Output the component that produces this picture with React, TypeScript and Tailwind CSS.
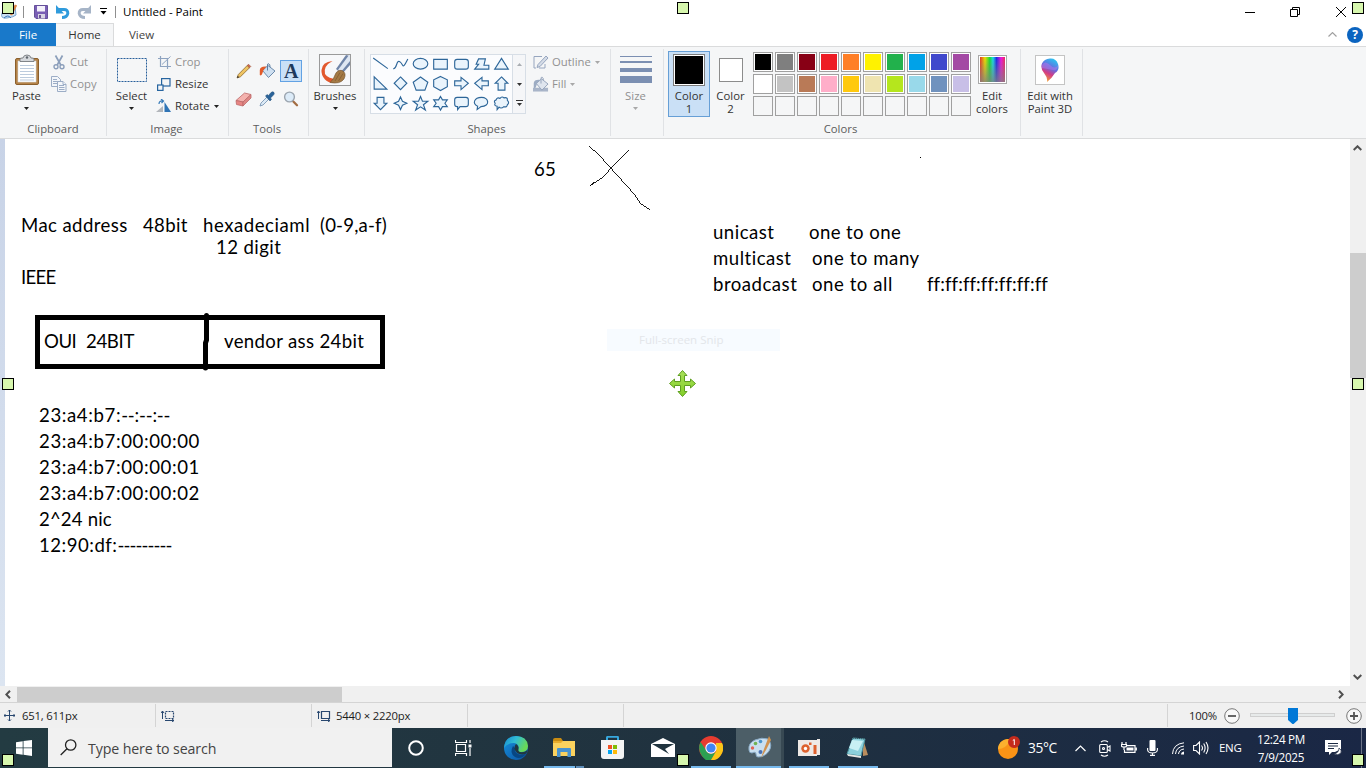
import React from "react";

type Kids = { children?: React.ReactNode };

function Caret({ c = "#333333" }: { c?: string }) {
  return (
    <svg width="5" height="3" viewBox="0 0 5 3" className="shrink-0">
      <path d="M0 0H5L2.5 3Z" fill={c} />
    </svg>
  );
}

function Group({ label, width, children, line = true, nudge = "pr-0" }: Kids & { label?: string; width: string; line?: boolean; nudge?: string }) {
  return (
    <div className={`${width} flex h-[91px] shrink-0 py-[2px]`}>
      <div className={`flex min-w-0 flex-1 flex-col ${line ? "border-r border-[#e0e2e5]" : ""}`}>
        <div className="flex h-[72px] w-full">{children}</div>
        <div className={`flex h-[15px] items-center justify-center pt-[1px] text-[#5c5c5c] ${nudge}`}>{label}</div>
      </div>
    </div>
  );
}

function BigButton({ icon, text, width, dim }: { icon: React.ReactNode; text: string; width: string; dim?: boolean }) {
  return (
    <div className={`${width} flex shrink-0 flex-col items-center ${dim ? "text-[#8f8f8f]" : "text-[#333]"}`}>
      <div className="flex h-[40px] w-full items-center justify-center pt-[1px]">{icon}</div>
      <div className="h-[13px] leading-[13px]">{text}</div>
      <div className="flex h-[13px] items-center">
        <Caret c={dim ? "#a8a8a8" : "#222222"} />
      </div>
    </div>
  );
}

function SmallRow({ icon, text, dim, caret }: { icon: React.ReactNode; text: string; dim?: boolean; caret?: boolean }) {
  return (
    <div className={`flex h-[22px] items-center ${dim ? "text-[#919191]" : "text-[#333]"}`}>
      <div className="mr-[3px] flex w-[16px] justify-center">{icon}</div>
      <span>{text}</span>
      {caret && <span className="ml-[4px] flex"><Caret c={dim ? "#a8a8a8" : "#222222"} /></span>}
    </div>
  );
}

function PasteIcon() {
  return (
    <svg width="26" height="32" viewBox="0 0 26 32">
      <rect x="1.5" y="4.5" width="23" height="26" rx="1.5" fill="#b58348" stroke="#8b5f2c" />
      <rect x="4" y="7" width="18" height="21" fill="#fff" stroke="#d6dce4" strokeWidth=".6" />
      <path d="M6 11.5H20M6 14.5H20M6 17.5H20M6 20.5H20M6 23.5H20M6 26H20" stroke="#bccbdd" />
      <path d="M6 7.5V5Q6 4 8 4H9Q9.500 1 13 1T17 4H18Q20 4 20 5V7.500Z" fill="#d5d8dc" stroke="#74787d" strokeWidth=".9" />
      <circle cx="13" cy="3.500" r="1.200" fill="#5f666e" />
    </svg>
  );
}

function CutIcon() {
  return (
    <svg width="12" height="15" viewBox="0 0 12 15" fill="none" stroke="#8c9fbb">
      <path d="M2.500 .5L7.800 10M9.500 .5L4.200 10" strokeWidth="1.700" />
      <circle cx="3" cy="11.800" r="2" strokeWidth="1.400" />
      <circle cx="9" cy="11.800" r="2" strokeWidth="1.400" />
    </svg>
  );
}

function CopyIcon() {
  return (
    <svg width="16" height="16" viewBox="0 0 16 16" fill="#f3f6fa" stroke="#9cadc6">
      <path d="M.5 .5H6.500L9.500 3.500V10.500H.5Z" />
      <path d="M2 3.500H6M2 5.500H7M2 7.500H7" />
      <path d="M6.500 5.500H12L15 8.500V15.500H6.500Z" />
      <path d="M8 9.500H13M8 11.500H13.500M8 13.500H13.500M12 5.500V8.500H15" />
    </svg>
  );
}

function CropIcon() {
  return (
    <svg width="13" height="13" viewBox="0 0 13 13" fill="none" stroke="#8ea3c0">
      <path d="M0 2.500H9.500V13M2.500 0V10.500H13" strokeWidth="1.200" />
      <path d="M4 8.500L12.500 .5" />
    </svg>
  );
}

function ResizeIcon() {
  return (
    <svg width="14" height="13" viewBox="0 0 14 13" fill="#f5f6f7" stroke="#2765a0" strokeWidth="1.200">
      <rect x="4.600" y=".6" width="8.400" height="7.400" />
      <rect x=".6" y="7" width="5.400" height="5.400" />
    </svg>
  );
}

function RotateIcon() {
  return (
    <svg width="16" height="14" viewBox="0 0 16 14">
      <path d="M0 13L7 7V13Z" fill="#b3b7bc" />
      <path d="M8.500 13V3L15 13Z" fill="#2f74b5" />
      <path d="M3 5Q3 1.500 7 2M5 0L7.500 2L5.500 4" fill="none" stroke="#3579b8" strokeWidth="1.200" />
    </svg>
  );
}

function PencilIcon() {
  return (
    <svg width="16" height="16" viewBox="0 0 16 16">
      <path d="M1 15L2.300 11.500L11.200 2.500L13.500 4.800L4.500 13.700Z" fill="#efc462" stroke="#8e6a2e" strokeWidth=".8" />
      <path d="M11.200 2.500L12.500 1.200L14.800 3.500L13.500 4.800Z" fill="#cf6a4c" stroke="#96503b" strokeWidth=".6" />
      <path d="M1 15L1.700 12.700L3.300 14.300Z" fill="#333" />
    </svg>
  );
}

function BucketIcon({ dim }: { dim?: boolean }) {
  return (
    <svg width="17" height="16" viewBox="0 0 17 16">
      {dim && <rect x="0" y="12" width="16" height="4" fill="#a9b5c9" />}
      <path d="M9 2.500L16 8L9.500 14.500L3.500 7.500Z" fill={dim ? "#dfe5ee" : "#cfe0f1"} stroke={dim ? "#93a2ba" : "#6c8bac"} />
      <path d="M8.500 7.500V2Q8.500 .5 9.800 .8T11 4" fill="none" stroke={dim ? "#93a2ba" : "#5a7ea5"} />
      <path d="M7.500 3.500Q1 3 .8 7V12Q2.500 13.500 3.500 10L4.500 7Z" fill={dim ? "#9dacc3" : "#e25b2a"} />
    </svg>
  );
}

function EraserIcon() {
  return (
    <svg width="17" height="15" viewBox="0 0 17 15" strokeWidth=".8" stroke="#bd6a69">
      <path d="M1 8.500L9.500 1L16 2.500L8 10Z" fill="#f4b2ae" />
      <path d="M1 8.500L8 10V14L1.500 12.500Z" fill="#e88583" />
      <path d="M8 10L16 2.500V6L8 14Z" fill="#df8785" />
    </svg>
  );
}

function PickerIcon() {
  return (
    <svg width="16" height="16" viewBox="0 0 16 16">
      <path d="M1 15L2 12L8 6L10 8L4 14Z" fill="#dceaf6" stroke="#6e8eae" strokeWidth=".8" />
      <path d="M6.500 5L8 3.500L9.500 4.500L12 1.500Q14 0 15 1.500T14 4.500L11.500 7L12.500 8.500L11 10Z" fill="#2a6399" stroke="#1f4c79" strokeWidth=".5" />
    </svg>
  );
}

function MagnifierIcon() {
  return (
    <svg width="16" height="16" viewBox="0 0 16 16">
      <path d="M9.800 10L14 14.300" stroke="#a36d43" strokeWidth="2.300" strokeLinecap="round" />
      <circle cx="6.500" cy="6" r="4.900" fill="#dcebf8" stroke="#9ba5af" strokeWidth="1.400" />
    </svg>
  );
}

function BrushIcon() {
  return (
    <svg width="32" height="32" viewBox="0 0 32 32">
      <rect x=".5" y=".5" width="31" height="31" fill="#f7f8fa" stroke="#9a9a9a" />
      <path d="M31 2L27 1L17 15L23 20L31 11Z" fill="#7085a8" />
      <path d="M30 1L19 16L21.500 18.500L31 7V1Z" fill="#dfe7f2" />
      <path d="M13.500 7Q3 8 2.500 16Q2 21 6 25.500Q10 30 17 28L19 25Q9 25 6 20Q4 12 13.500 7Z" fill="#e2582d" />
      <path d="M11 28.500Q15 25 16 21Q18 15.500 23 16.500Q28 19 25 25Q21 30.500 11 28.500Z" fill="#a47a45" stroke="#6d4f2c" strokeWidth=".6" />
      <path d="M16 27L21 18.500M19.500 27L24 19.500" stroke="#7c5930" strokeWidth=".7" />
    </svg>
  );
}

const shapes: string[] = [
  "M2 3L17 14",
  "M2 14C6 15 5 4 9 7S11 16 17 4",
  "M17 9A7.500 5.500 0 1 1 2 9A7.500 5.500 0 1 1 17 9Z",
  "M2.500 4.500H16.500V14.500H2.500Z",
  "M5 4.500H14Q16.500 4.500 16.500 7V12Q16.500 14.500 14 14.500H5Q2.500 14.500 2.500 12V7Q2.500 4.500 5 4.500Z",
  "M2.500 14.500L6.500 9.500H4L6.500 4H13.500L12 10.500H17V14.500Z",
  "M9.500 3.500L16.500 14.500H2.500Z",
  "M3 3V15.500H16Z",
  "M9.500 3L16 9.500L9.500 16L3 9.500Z",
  "M9.500 3L17 8.500L14 16.500H5L2 8.500Z",
  "M9.500 2.500L16.500 6V13L9.500 17L2.500 13V6Z",
  "M2.500 7H9V3.500L16.500 9.500L9 16V12H2.500Z",
  "M16.500 7H10V3.500L2.500 9.500L10 16V12H16.500Z",
  "M9.500 3L16 9.500H13V16.500H6V9.500H3Z",
  "M6 3.500H13V9.500H16L9.500 16L3 9.500H6Z",
  "M9.500 3L11.500 7.500L16 9.500L11.500 11.500L9.500 16L7.500 11.500L3 9.500L7.500 7.500Z",
  "M9.500 2.500L11.500 7.500H17L12.500 11L14.500 16.500L9.500 13.200L4.500 16.500L6.500 11L2 7.500H7.500Z",
  "M9.500 2.500L11.500 6H16.500L14 9.500L16.500 13H11.500L9.500 16.500L7.500 13H2.500L5 9.500L2.500 6H7.500Z",
  "M5 3.500H14Q16.500 3.500 16.500 6V10.500Q16.500 13 14 13H8L5.500 16V13H5Q2.500 13 2.500 10.500V6Q2.500 3.500 5 3.500Z",
  "M5.500 12.500C-.5 10 2 3.500 9.500 3.500S19 12.500 9 13L5 16Z",
  "M5 12.500Q1.500 12 3 9.500Q1 7 4 6Q5 3 8 4.500Q10 2 12 4Q16 3 15.500 6.500Q18 9 15.500 11Q15 14 12 13Q9 15.500 7 13.500L5 16Z",
];

function ShapesGallery() {
  return (
    <div className="ml-[5px] mt-[5px] flex h-[60px] w-[156px] border border-[#d7dee6] bg-[#fbfcfe]">
      <div className="grid w-[142px] grid-cols-7 grid-rows-3 border-r border-[#d7dee6]">
        {shapes.map((d, i) => (
          <svg key={i} className="h-[19.500px] w-[20px]" viewBox="0 0 20 20" fill={i < 2 ? "none" : "#eaf4fc"} stroke="#2d6699" strokeWidth="1.150">
            <path d={d} />
          </svg>
        ))}
      </div>
      <div className="flex flex-1 flex-col items-center justify-between bg-[#f5f6f8] pb-[6px] pt-[8px]">
        <span className="rotate-180"><Caret c="#a9adb2" /></span>
        <span className="pt-[2px]"><Caret /></span>
        <svg width="7" height="7" viewBox="0 0 7 7"><path d="M0 .5H7" stroke="#333" /><path d="M1 3H6L3.500 6Z" fill="#333" /></svg>
      </div>
    </div>
  );
}

function OutlineIcon() {
  return (
    <svg width="16" height="14" viewBox="0 0 16 14" fill="none" stroke="#97a6bf">
      <path d="M9 1.500H1V13H3M12 9V13H6" />
      <path d="M4 12.500L5 9.500L13 1L15 3L7 11.500Z" fill="#d5dce7" />
    </svg>
  );
}

const palette = [
  "#000000", "#7f7f7f", "#880015", "#ed1c24", "#ff7f27", "#fff200", "#22b14c", "#00a2e8", "#3f48cc", "#a349a4",
  "#ffffff", "#c3c3c3", "#b97a57", "#ffaec9", "#ffc90e", "#efe4b0", "#b5e61d", "#99d9ea", "#7092be", "#c8bfe7",
];

function ColorsGroup() {
  return (
    <Group label="Colors" width="w-[357px]" nudge="pr-[3px]">
      <div className="ml-[4px] mt-[2px] flex h-[66px] w-[42px] shrink-0 flex-col items-center border border-[#669fd6] bg-[#cae0f6] pt-[2px] text-center leading-[13px] text-[#333]">
        <div className="h-[32px] w-[32px] border border-[#7c7c7c] bg-white p-px"><div className="h-full w-full bg-black" /></div>
        <div className="mt-[3px]">Color<br />1</div>
      </div>
      <div className="flex w-[41px] shrink-0 flex-col items-center pt-[9px] text-center leading-[13px] text-[#333]">
        <div className="h-[24px] w-[24px] border border-[#8c8c8c] bg-white" />
        <div className="mt-[7px]">Color<br />2</div>
      </div>
      <div className="ml-[2px] mt-[3px] grid h-[64px] w-[218px] shrink-0 grid-cols-10 gap-[2px]">
        {Array.from({ length: 30 }, (_, i) => (
          <div key={i} className={`h-[20px] w-[20px] border border-[#a0a0a0] p-px ${i < 20 ? "bg-white" : "bg-[#f5f6f7]"}`}>
            {i < 20 && <div className="h-full w-full" style={{ background: palette[i] }} />}
          </div>
        ))}
      </div>
      <div className="flex w-[42px] shrink-0 flex-col items-center pt-[6px] text-center leading-[13px] text-[#333]">
        <div className="h-[29px] w-[29px] border border-[#a9a9a9] bg-white p-px">
          <div className="h-full w-full bg-[linear-gradient(to_bottom,transparent,#808080cc),linear-gradient(to_right,#e73520,#efe000_20%,#11de31_39%,#17dce8_52%,#1a29e8_66%,#ef13df_84%,#ee285c)]" />
        </div>
        <div className="mt-[5px]">Edit<br />colors</div>
      </div>
    </Group>
  );
}

function Paint3DIcon() {
  return (
    <div className="flex h-[30px] w-[30px] items-center justify-center border border-[#c4c4c4] bg-white">
      <svg width="18" height="25" viewBox="0 0 18 25">
        <defs>
          <linearGradient id="p3d" x1=".7" y1="0" x2=".3" y2="1">
            <stop offset="0" stopColor="#29c5f0" />
            <stop offset=".4" stopColor="#686adf" />
            <stop offset=".65" stopColor="#d13c86" />
            <stop offset="1" stopColor="#f6a92b" />
          </linearGradient>
        </defs>
        <path d="M6 24Q7 20 3 15Q-1 10 1 5.500T9 .5T17 6T14 15Q11 20 6 24Z" fill="url(#p3d)" />
        <path d="M1 7Q4 2 9 7T17 7Q17 13 12 12T1 10Z" fill="#ad78e7" opacity=".55" />
      </svg>
    </div>
  );
}

function Ribbon() {
  return (
    <div className="flex h-[93px] shrink-0 border-y border-[#dadbdc] bg-[#f5f6f7] text-[11.300px] tracking-[0.020px]">
      <Group label="Clipboard" width="w-[107px]">
        <BigButton width="w-[53px]" icon={<PasteIcon />} text="Paste" />
        <div className="-ml-[2px] flex flex-col pt-[2px]">
          <SmallRow dim icon={<CutIcon />} text="Cut" />
          <SmallRow dim icon={<CopyIcon />} text="Copy" />
        </div>
      </Group>
      <Group label="Image" width="w-[122px]" nudge="pr-[2px]">
        <BigButton width="w-[49px]" text="Select" icon={<svg width="30" height="24"><rect x=".5" y=".5" width="29" height="23" fill="none" stroke="#275f9b" strokeDasharray="2 1" /></svg>} />
        <div className="flex flex-col pt-[2px]">
          <SmallRow dim icon={<CropIcon />} text="Crop" />
          <SmallRow icon={<ResizeIcon />} text="Resize" />
          <SmallRow icon={<RotateIcon />} text="Rotate" caret />
        </div>
      </Group>
      <Group label="Tools" width="w-[80px]" nudge="pr-[3px]">
        <div className="ml-[3px] mt-[6px] grid h-[57px] w-[71px] grid-cols-3 place-items-center">
          <PencilIcon />
          <BucketIcon />
          <div className="flex h-[22px] w-[22px] items-center justify-center border border-[#62a2e4] bg-[#c9e0f7] font-['Liberation_Serif',serif] text-[20px] font-bold leading-none text-[#1f3a5c]">A</div>
          <EraserIcon />
          <PickerIcon />
          <MagnifierIcon />
        </div>
      </Group>
      <Group width="w-[56px]"><BigButton width="w-[52px]" icon={<BrushIcon />} text="Brushes" /></Group>
      <Group label="Shapes" width="w-[246px]" nudge="pr-[2px]">
        <ShapesGallery />
        <div className="ml-[7px] flex flex-col pt-[2px]">
          <SmallRow dim icon={<OutlineIcon />} text="Outline" caret />
          <SmallRow dim icon={<BucketIcon dim />} text="Fill" caret />
        </div>
      </Group>
      <Group width="w-[53px]">
        <BigButton dim width="w-[49px]" text="Size" icon={<div className="flex flex-col"><i className="h-px w-[32px] bg-[#7b8fb2]" /><i className="mt-[4px] h-[2px] w-[32px] bg-[#7b8fb2]" /><i className="mt-[5px] h-[4px] w-[32px] bg-[#7b8fb2]" /><i className="mt-[4px] h-[7px] w-[32px] bg-[#7b8fb2]" /></div>} />
      </Group>
      <ColorsGroup />
      <Group width="w-[62px]">
        <div className="flex w-[58px] flex-col items-center pt-[6px] text-center leading-[13px] text-[#333]">
          <Paint3DIcon />
          <div className="mt-[4px] whitespace-nowrap">Edit with<br />Paint 3D</div>
        </div>
      </Group>
    </div>
  );
}

function TitleBar() {
  return (
    <div className="flex h-[23px] shrink-0 items-center bg-white">
      <svg className="ml-[1px]" width="16" height="17" viewBox="0 0 16 17">
        <path d="M1 10Q-1 16 6 15T15 12L14 3L5 5Z" fill="#cfe2f3" stroke="#7ba7d0" />
        <path d="M10 12L15 2" stroke="#dc8644" strokeWidth="2.500" />
        <path d="M3 15Q7 11 10 15" stroke="#3a78bd" fill="none" />
      </svg>
      <div className="ml-[6px] h-[12px] w-px bg-[#8f8f8f]" />
      <svg className="ml-[10px]" width="14" height="14" viewBox="0 0 14 14">
        <path d="M.5 .5H13.500V13.500H2L.5 12Z" fill="#7a5fb5" stroke="#65509a" />
        <rect x="3" y="1" width="8" height="5.500" fill="#f4f1fb" />
        <rect x="4" y="9" width="7" height="4.500" fill="#d8d5e3" />
        <rect x="5" y="10" width="2" height="3" fill="#6b5596" />
      </svg>
      <svg className="ml-[8px]" width="14" height="14" viewBox="0 0 14 14"><path d="M3 4.500H8Q12 4.500 11.800 8.500Q11 12.500 6 12.500" fill="none" stroke="#2f9bdc" strokeWidth="3" /><path d="M0 0V8.500H8Z" fill="#2f9bdc" /></svg>
      <svg className="ml-[7px]" width="14" height="14" viewBox="0 0 14 14"><path d="M11 4.500H6Q2 4.500 2.200 8.500Q3 12.500 8 12.500" fill="none" stroke="#a6b4c7" strokeWidth="3" /><path d="M14 0V8.500H6Z" fill="#a6b4c7" /></svg>
      <svg className="ml-[9px]" width="7" height="7" viewBox="0 0 7 7"><path d="M0 .5H7" stroke="#000" /><path d="M.5 3H6.500L3.500 6.500Z" /></svg>
      <div className="ml-[8px] h-[12px] w-px bg-[#8f8f8f]" />
      <span className="ml-[7px] text-[11.500px] text-black">Untitled - Paint</span>
      <svg className="ml-auto mr-[19px]" width="102" height="12" viewBox="0 0 102 12" fill="none" stroke="#000">
        <path d="M0 6.500H10M45.500 3.500H52.500V10.500H45.500ZM47.500 3V1.500H54.500V8.500H53M91 1L101 11M101 1L91 11" />
      </svg>
    </div>
  );
}

function TabBar() {
  return (
    <div className="flex h-[23px] shrink-0 items-center bg-white text-[11.500px]">
      <div className="flex h-full w-[56px] items-center justify-center bg-[#1979ca] text-white">File</div>
      <div className="-mb-px flex h-[24px] w-[58px] items-center justify-center border-r border-t border-[#dadbdc] bg-[#f5f6f7] pb-px text-[#333]">Home</div>
      <div className="flex w-[55px] items-center justify-center text-[#444]">View</div>
      <svg className="ml-auto mr-[10px]" width="9" height="5" viewBox="0 0 9 5" fill="none" stroke="#a0a0a0" strokeWidth="1.200"><path d="M.5 4.500L4.500 .6L8.500 4.500" /></svg>
      <div className="mr-[3px] flex h-[16px] w-[16px] items-center justify-center rounded-full bg-[#0b64c0] text-[12px] font-bold text-white">?</div>
    </div>
  );
}

function Note({ at, children }: Kids & { at: string }) {
  return <div className={`absolute whitespace-pre leading-[26px] ${at}`}>{children}</div>;
}

function Canvas() {
  return (
    <div className="flex h-[547px] shrink-0">
      <div className="w-[5px] bg-gradient-to-b from-[#c8d3e7] to-[#dce5f1]" />
      <div className="relative flex-1 overflow-hidden bg-white font-[Lato,sans-serif] text-[18.600px] text-black">
        <Note at="left-[529px] top-[17px] tracking-[0.200px]">65</Note>
        <Note at="left-[16px] top-[73px] tracking-[0.400px]">Mac address</Note>
        <Note at="left-[138px] top-[73px] tracking-[0.300px]">48bit</Note>
        <Note at="left-[198px] top-[73px] tracking-[0.550px]">hexadeciaml</Note>
        <Note at="left-[315px] top-[73px] tracking-[0.180px]">(0-9,a-f)</Note>
        <Note at="left-[211px] top-[95px] tracking-[0.400px]">12 digit</Note>
        <Note at="left-[16px] top-[125px] tracking-[-0.700px]">IEEE</Note>
        <Note at="left-[39px] top-[189px] tracking-[-0.500px]">OUI</Note>
        <Note at="left-[81px] top-[189px] tracking-[-0.350px]">24BIT</Note>
        <Note at="left-[219px] top-[189px] tracking-[0.340px]">vendor ass 24bit</Note>
        <Note at="left-[34px] top-[263px] tracking-[0.600px]">
          23:a4:b7:<span className="tracking-[-0.200px]">--:--:--</span>
          {"\n23:a4:b7:00:00:00\n23:a4:b7:00:00:01\n23:a4:b7:00:00:02\n"}
          <span className="tracking-[0.150px]">2^24 nic</span>
          {"\n"}
          <span className="tracking-[0.500px]">12:90:df:</span><span className="tracking-[-0.900px]">---------</span>
        </Note>
        <Note at="left-[708px] top-[80px] tracking-[0.500px]">{"unicast\nmulticast\nbroadcast"}</Note>
        <Note at="left-[804px] top-[80px] tracking-[0.400px]">one to one</Note>
        <Note at="left-[807px] top-[106px] tracking-[0.550px]">{"one to many\none to all"}</Note>
        <Note at="left-[922px] top-[132px] tracking-[0.090px]">ff:ff:ff:ff:ff:ff:ff</Note>
        <svg className="absolute left-0 top-0" width="1345" height="546" viewBox="5 139 1345 546" fill="none" stroke="#000">
          <path d="M37.500 317.500H382.500V366.500H37.500Z" strokeWidth="5" />
          <path d="M206.500 315.500V340L205.500 343V368" strokeWidth="5" strokeLinecap="round" />
          <g shapeRendering="crispEdges">
            <path strokeWidth=".9" d="M589 146L599 155L608 165L618 176L626 185L635 195L641 204L649.500 209.500M629 150L614 165L603 177L590 186L594 182" />
            <path d="M920 157.500H921" />
          </g>
          <defs><linearGradient id="mv" x1="0" y1="0" x2="0" y2="1"><stop offset="0" stopColor="#a8e05a" /><stop offset="1" stopColor="#83cf28" /></linearGradient></defs>
          <path d="M682.500 370.500L687 375.500H684.500V381.500H690.500V379L695.500 383.500L690.500 388V385.500H684.500V391.500H687L682.500 396.500L678 391.500H680.500V385.500H674.500V388L669.500 383.500L674.500 379V381.500H680.500V375.500H678Z" fill="url(#mv)" stroke="#5f9f21" />
        </svg>
        <div className="absolute left-[602px] top-[190px] flex h-[22px] w-[173px] items-center bg-[#f7fbff] pl-[32px] font-['Open_Sans',sans-serif] text-[11.500px] text-[#e3e6ea]">Full-screen Snip</div>
      </div>
      <div className="flex w-[16px] flex-col items-center bg-[#f0f0f0]">
        <svg className="mr-[1px] mt-[6px]" width="9" height="6" fill="none" stroke="#505050" strokeWidth="2"><path d="M.7 5L4.500 1.300L8.300 5" /></svg>
        <div className="mt-[102px] h-[125px] w-full bg-[#cdcdcd]" />
        <svg className="mb-[6px] mr-[1px] mt-auto" width="9" height="6" fill="none" stroke="#505050" strokeWidth="2"><path d="M.7 1L4.500 4.700L8.300 1" /></svg>
      </div>
    </div>
  );
}

function ZoomKnob({ plus }: { plus?: boolean }) {
  return (
    <svg width="16" height="16" viewBox="0 0 16 16" fill="#f8f8f8" stroke="#777">
      <circle cx="8" cy="8" r="7.300" />
      <path d={plus ? "M4 8H12M8 4V12" : "M4 8H12"} stroke="#555" strokeWidth="1.800" />
    </svg>
  );
}

function SizeIcon({ dashed }: { dashed?: boolean }) {
  return (
    <svg width="14" height="12" viewBox="0 0 14 12" fill="none" stroke="#28476f">
      <path d="M4.500 1.500H12.500V8.500H4.500Z" strokeDasharray={dashed ? "2 1" : undefined} strokeWidth="1.200" />
      <path d="M1.500 9V1M0 3L1.500 1L3 3M4 10.500H13M11 9L13 10.500L11 12" />
    </svg>
  );
}

function StatusBar() {
  return (
    <>
      <div className="flex h-[16px] shrink-0 items-center bg-[#f0f0f0]">
        <svg className="ml-[5px]" width="6" height="9" fill="none" stroke="#505050" strokeWidth="2"><path d="M5 .7L1.300 4.500L5 8.300" /></svg>
        <div className="ml-[6px] h-[15px] w-[325px] bg-[#cdcdcd]" />
        <svg className="ml-auto mr-[22px]" width="6" height="9" fill="none" stroke="#505050" strokeWidth="2"><path d="M1 .7L4.700 4.500L1 8.300" /></svg>
      </div>
      <div className="flex h-[26px] shrink-0 items-center border-t border-[#d4d4d4] bg-[#f0f0f0] text-[11.300px] tracking-[-0.200px] text-[#1c1c1c]">
        <div className="flex h-[23px] w-[156px] items-center border-r border-[#d4d4d4] pl-[4px]">
          <svg width="11" height="11" viewBox="0 0 11 11" fill="none" stroke="#28476f"><path d="M5.500 0V11M0 5.500H11M4 1.500L5.500 0L7 1.500M4 9.500L5.500 11L7 9.500M1.500 4L0 5.500L1.500 7M9.500 4L11 5.500L9.500 7" /></svg>
          <span className="ml-[7px] pt-[2px]">651, 611px</span>
        </div>
        <div className="flex h-[23px] w-[156px] items-center border-r border-[#d4d4d4] pl-[5px]"><SizeIcon dashed /></div>
        <div className="flex h-[23px] w-[156px] items-center border-r border-[#d4d4d4] pl-[5px]"><SizeIcon /><span className="ml-[5px] pt-[2px]">5440 × 2220px</span></div>
        <div className="h-[23px] w-[156px] border-r border-[#d4d4d4]" />
        <div className="ml-auto flex h-[23px] w-[199px] items-center border-l border-[#d4d4d4] pl-[21px]">
          <span className="w-[28px] whitespace-nowrap pt-[2px]">100%</span>
          <span className="ml-[7px]"><ZoomKnob /></span>
          <svg className="ml-[10px]" width="85" height="16" viewBox="0 0 85 16">
            <rect x=".5" y="5.500" width="84" height="3" fill="#e7eaea" stroke="#cfcfcf" />
            <path d="M38 0H48V12L43 16.500L38 12Z" fill="#0078d7" />
          </svg>
          <span className="ml-[11px]"><ZoomKnob plus /></span>
        </div>
      </div>
    </>
  );
}

function Task({ width, bar, active, children }: Kids & { width: string; bar?: string; active?: boolean }) {
  return (
    <div className={`${width} flex h-[40px] shrink-0 flex-col items-center ${active ? "bg-[#4c5e67]" : ""}`}>
      <div className="flex h-[38px] items-center pt-[1px]">{children}</div>
      {bar && <div className={`h-[2px] bg-[#76b9ed] ${bar}`} />}
    </div>
  );
}

function EdgeIcon() {
  return (
    <svg width="24" height="24" viewBox="0 0 24 24">
      <defs>
        <linearGradient id="eg" x1="0" y1="0" x2="1" y2=".4"><stop offset="0" stopColor="#1789d0" /><stop offset=".5" stopColor="#31bdd4" /><stop offset="1" stopColor="#69d957" /></linearGradient>
        <linearGradient id="eb" x1="0" y1="0" x2="1" y2="1"><stop offset="0" stopColor="#1692dc" /><stop offset="1" stopColor="#0c51a1" /></linearGradient>
      </defs>
      <circle cx="12" cy="12" r="12" fill="url(#eb)" />
      <path d="M0 12Q1 0 12 0Q23 0 24 10Q24 16 17 16Q13 16 14.500 12Q15 8 10 7Q3 7 0 12Z" fill="url(#eg)" />
      <path d="M9 10Q5 17 11 21Q17 24 22 18Q17 20 14 18Q10 16 11 12Z" fill="#084683" />
      <path d="M12 8Q15 10 14.500 13Q13.500 16 17.500 16.300Q21 16.500 23.500 14Q23 19 18 18.500Q12 18 10.500 13Q10 10 12 8Z" fill="#203740" />
    </svg>
  );
}

function Taskbar() {
  return (
    <div className="flex h-[40px] shrink-0 bg-gradient-to-r from-[#233b42] via-[#20323f] to-[#1a2745]">
      <div className="flex w-[48px] items-center justify-center">
        <svg width="16" height="16" viewBox="0 0 16 16" fill="#fff"><path d="M0 2.200L6.700 1.200V7.500H0ZM7.500 1.100L16 0V7.500H7.500ZM0 8.300H6.700V14.700L0 13.700ZM7.500 8.300H16V16L7.500 14.800Z" /></svg>
      </div>
      <div className="flex h-[39px] w-[344px] items-center bg-[#f1f1f1] text-[#444]">
        <svg className="ml-[12px]" width="17" height="17" viewBox="0 0 17 17" fill="none" stroke="#222" strokeWidth="1.300"><circle cx="10.700" cy="6" r="5.200" /><path d="M7 9.700L.7 16" /></svg>
        <span className="ml-[11px] pt-[2px] text-[14.200px] tracking-[-0.120px]">Type here to search</span>
      </div>
      <Task width="w-[48px]"><svg width="16" height="16"><circle cx="8" cy="8" r="6.800" fill="none" stroke="#fff" strokeWidth="2" /></svg></Task>
      <Task width="w-[47px]">
        <svg width="17" height="16" viewBox="0 0 17 16" fill="none" stroke="#fff" strokeWidth="1.200"><path d="M1.500 4.500H10.500V11.500H1.500ZM.5 0V2.500H11.500V0M.5 16V13.500H11.500V16M15 0V3M15 8V16" /><rect x="13.500" y="4.500" width="3" height="3" fill="#fff" stroke="none" /></svg>
      </Task>
      <Task width="w-[57px]"><EdgeIcon /></Task>
      <div className="flex h-[40px] w-[40px] shrink-0 flex-col">
        <div className="flex h-[38px] items-center justify-center pt-px">
          <svg width="22" height="20" viewBox="0 0 22 20"><path d="M0 2Q0 0 2 0H8L10 3H0Z" fill="#c98c12" /><path d="M0 3H22V18H0Z" fill="#fbd25e" /><path d="M0 3H10L8 5H0Z" fill="#e9ac2c" /><path d="M4 19V11Q4 10 5 10H17Q18 10 18 11V19H14.500V14H7.500V19Z" fill="#4993cf" /></svg>
        </div>
        <div className="flex h-[2px] gap-px"><i className="w-[31px] bg-[#76b9ed]" /><i className="w-[8px] bg-[#5d8db8]" /></div>
      </div>
      <Task width="w-[57px]">
        <svg width="23" height="24" viewBox="0 0 23 24"><path d="M6 6V1.500Q6 .8 7 .8H16Q17 .8 17 1.500V6" fill="none" stroke="#37a8de" strokeWidth="2" /><path d="M0 4H23V20Q23 23 20 23H3Q0 23 0 20Z" fill="#f4f4f4" /><path d="M7 9H11V13H7Z" fill="#f35325" /><path d="M12 9H16V13H12Z" fill="#81bc06" /><path d="M7 14H11V18H7Z" fill="#05a6f0" /><path d="M12 14H16V18H12Z" fill="#ffba08" /></svg>
      </Task>
      <Task width="w-[43px]">
        <svg width="24" height="19" viewBox="0 0 24 19"><path d="M0 6L12 0L24 6V19H0Z" fill="#fff" /><path d="M1 6H23L14 11L18 16L1 6Z" fill="#20343f" /></svg>
      </Task>
      <Task width="w-[52px] pl-[2px]" bar="w-[40px]">
        <svg width="24" height="24" viewBox="0 0 24 24"><circle cx="12" cy="12" r="12" fill="#e73c30" /><path d="M1.600 6Q-2 13 3 20T12 24L18 15Q14 19 9 17Z" fill="#2ca052" /><path d="M12 24L17.200 15L17 7H23Q26 13 22 19T12 24Z" fill="#fbc518" /><circle cx="12" cy="12" r="5.700" fill="#fff" /><circle cx="12" cy="12" r="4.600" fill="#4285f4" /></svg>
      </Task>
      <Task width="w-[45px]" bar="w-full" active>
        <svg className="ml-[3px]" width="24" height="23" viewBox="0 0 24 23"><path d="M1 14Q0 7 7 4T20 3Q25 9 21 15T10 21Q8 21 8 18T4 17Q1 17 1 14Z" fill="#c9dfef" stroke="#89aac5" /><g><circle cx="4.500" cy="12" r="1.700" fill="#e06356" /><circle cx="7.500" cy="7.500" r="1.800" fill="#6fb252" /><circle cx="12.500" cy="5.500" r="1.800" fill="#4a95cc" /><circle cx="12.500" cy="16" r="2" fill="#4a70b1" /></g><path d="M13 22L16 13L21 0L23 4L18 14Z" fill="#cf924f" /></svg>
      </Task>
      <div className="mr-[5px] w-[3px] bg-[#384953]" />
      <Task width="w-[40px]" bar="w-full">
        <svg width="22" height="18" viewBox="0 0 22 18"><path d="M0 1H19V17H0ZM19 0H22V16H19Z" fill="#eee9e6" /><circle cx="7.500" cy="9.500" r="4.200" fill="#dd612e" /><circle cx="7.500" cy="9.500" r="1.700" fill="#fff" /><path d="M11 3.500H13.500V6H11ZM15.500 6H18.500V15H15.500Z" fill="#dd612e" /></svg>
      </Task>
      <Task width="w-[58px]" bar="w-[40px]">
        <svg width="24" height="21" viewBox="0 0 24 21"><path d="M17 2L22 18L17 19Z" fill="#b98d5e" /><path d="M7 1L19 2L15 19L1 17Z" fill="#8bd0dc" stroke="#4b919d" /><path d="M6 3L17 4L12 14L3 11Z" fill="#c9f0f4" /><path d="M1 17L15 19V21L2 19Z" fill="#e7e9e7" /><path d="M7 1L19 2" stroke="#39545c" strokeDasharray="1 1" /></svg>
      </Task>
      <div className="ml-auto flex w-[368px] items-center text-[12px] text-white">
        <svg width="23" height="24" viewBox="0 0 23 24" className="shrink-0"><circle cx="10" cy="13" r="10" fill="#f99316" /><path d="M0 13A10 10 0 0 1 13 3.500Q8 13 0 13Z" fill="#fbb02e" /><circle cx="16" cy="6" r="6" fill="#c42b1c" /><path d="M14.800 4.500L16.300 3.500V9" stroke="#fff" fill="none" /></svg>
        <span className="ml-[7px] w-[29px] whitespace-nowrap text-[13.800px] tracking-[-0.400px]">35°C</span>
        <svg className="ml-[18px]" width="11" height="7" fill="none" stroke="#fff" strokeWidth="1.200"><path d="M.5 6L5.500 1L10.500 6" /></svg>
        <svg className="ml-[13px]" width="12" height="17" viewBox="0 0 12 17" fill="none" stroke="#fff" strokeWidth="1.100"><rect x=".7" y="4.500" width="7.600" height="8" rx="1" /><path d="M8.300 7.500L11 6V11L8.300 9.500M2 2Q5.500 -.5 9 2M2 15Q5.500 17.500 9 15" /><circle cx="4.500" cy="8.500" r="1" /></svg>
        <svg className="ml-[10px]" width="16" height="13" viewBox="0 0 16 13" fill="none" stroke="#fff" strokeWidth="1.200"><path d="M6 3.600H14V10.400H3.500V8M15.300 5.500V8.500M3 8V5M1 0V2.500M5 0V2.500M.5 2.500H5.500V4Q5.500 5 3 5T.5 4Z" /><rect x="5.500" y="5.500" width="7" height="3" fill="#fff" stroke="none" /></svg>
        <svg className="ml-[10px]" width="11" height="16" viewBox="0 0 11 16" fill="none" stroke="#fff" strokeWidth="1.100"><rect x="2.500" y="0" width="6" height="11" rx="1" fill="#fff" stroke="none" /><path d="M.6 8V10Q1 13 5.500 13T10.400 10V8M5.500 13V16M3 15.400H8" /></svg>
        <svg className="ml-[14px]" width="13" height="13" viewBox="0 0 13 13" fill="none" stroke="#fff"><path d="M.5 12Q1 2 12 .8M3.500 12Q4 5 12 4M6.500 12Q7 7.500 12 7" /><path d="M9 12.500Q9 10 12 9.500V12.500Z" fill="#fff" stroke="none" /></svg>
        <svg className="ml-[8px]" width="17" height="14" viewBox="0 0 17 14" fill="none" stroke="#fff" strokeWidth="1.100"><path d="M.6 4.500H3L6.500 1V13L3 9.500H.6ZM8.500 4.500Q10.500 7 8.500 9.500M10.700 2.500Q13.500 7 10.700 11.500M13 1Q17 7 13 13" /></svg>
        <span className="ml-[9px] w-[24px] whitespace-nowrap text-[11.500px] tracking-[-0.300px]">ENG</span>
        <div className="-mt-px ml-[11px] w-[54px] whitespace-nowrap text-center text-[11.700px] leading-[18px] tracking-[-0.300px]">12:24 PM<br />7/9/2025</div>
        <svg className="ml-[17px]" width="17" height="16" viewBox="0 0 17 16"><path d="M0 0H16V9L10 12H7L4 15V12H0Z" fill="#fff" /><path d="M3 3.500H13M3 6H13M3 8.500H9" stroke="#1c2a43" /><path d="M14 8Q17 10 16 13Q13 16 9 14Q14 13 14 8Z" fill="#fff" stroke="#1c2a43" strokeWidth=".7" /></svg>
        <div className="ml-auto mr-[4px] h-[40px] w-px bg-[#6b7387]" />
      </div>
    </div>
  );
}

function Handle({ at }: { at: string }) {
  return <div className={`absolute h-[12px] w-[12px] border border-black bg-[#d7f7ae] ${at}`} />;
}

export default function App() {
  return (
    <div className="relative flex h-[768px] w-[1366px] flex-col overflow-hidden bg-white font-['Open_Sans','Noto_Sans',sans-serif]">
      <TitleBar />
      <TabBar />
      <Ribbon />
      <Canvas />
      <StatusBar />
      <Taskbar />
      <Handle at="left-[2px] top-[2px]" />
      <Handle at="left-[677px] top-[2px]" />
      <Handle at="left-[1352px] top-[2px]" />
      <Handle at="left-[2px] top-[378px]" />
      <Handle at="left-[1352px] top-[378px]" />
      <Handle at="left-[2px] top-[754px]" />
      <Handle at="left-[677px] top-[754px]" />
      <Handle at="left-[1352px] top-[754px]" />
    </div>
  );
}
